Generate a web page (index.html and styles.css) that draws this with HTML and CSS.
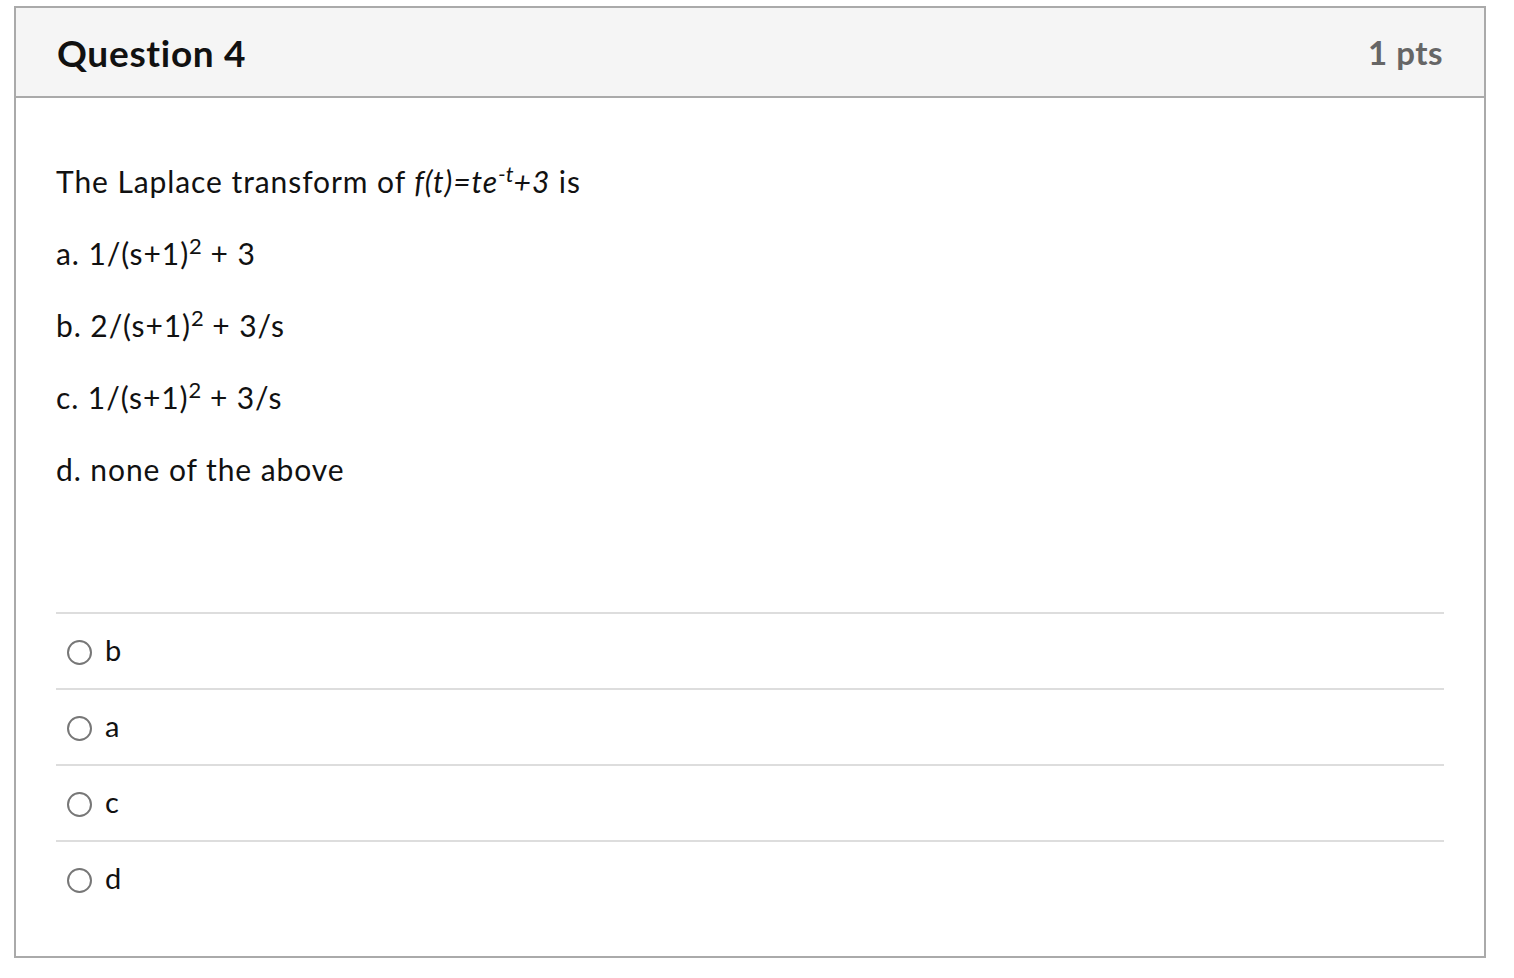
FILE: index.html
```html
<!DOCTYPE html>
<html>
<head>
<meta charset="utf-8">
<link rel="stylesheet" href="styles.css">
</head>
<body>
<div class="card">
  <div class="header">
    <h2 class="title">Question 4</h2>
    <span class="pts">1 pts</span>
  </div>
  <div class="content">
    <div class="question">
      <p>The Laplace transform of <em>f(t)=te<sup>-t</sup>+3</em> is</p>
      <p>a. 1/(s+1)<sup>2</sup> + 3</p>
      <p>b. 2/(s+1)<sup>2</sup> + 3/s</p>
      <p>c. 1/(s+1)<sup>2</sup> + 3/s</p>
      <p>d. none of the above</p>
    </div>
    <div class="answers">
      <label class="answer"><span class="radio"></span><span class="label">b</span></label>
      <label class="answer"><span class="radio"></span><span class="label">a</span></label>
      <label class="answer"><span class="radio"></span><span class="label">c</span></label>
      <label class="answer"><span class="radio"></span><span class="label">d</span></label>
    </div>
  </div>
</div>
</body>
</html>
```

FILE: styles.css
```css
html, body {
  margin: 0;
  background: #fff;
}
body {
  padding: 6px 28px 20px 14px;
  font-family: Lato, "Open Sans", sans-serif;
  color: #111;
}
.card {
  border: 2px solid #aaa;
  background: #fff;
}
.header {
  height: 88px;
  background: #f5f5f5;
  border-bottom: 2px solid #aaa;
  display: flex;
  align-items: center;
  justify-content: space-between;
  padding: 0 41px;
}
.title {
  margin: 0;
  font-size: 37px;
  font-weight: 700;
  color: #111;
  letter-spacing: 0.7px;
}
.pts {
  font-size: 33px;
  font-weight: 700;
  color: #666;
  letter-spacing: 0.5px;
}
.content {
  padding: 62px 40px 40px 40px;
}
.question p {
  margin: 0 0 30px 0;
  font-size: 30px;
  line-height: 42px;
  letter-spacing: 0.92px;
}
.question p:last-child {
  margin-bottom: 0;
}
.question sup {
  font-size: 22px;
  line-height: 0;
  letter-spacing: 0;
}
.answers {
  margin-top: 122px;
}
.answer {
  display: flex;
  align-items: center;
  height: 74px;
  border-top: 2px solid #ddd;
}
.radio {
  width: 21px;
  height: 21px;
  border: 2px solid #777;
  border-radius: 50%;
  margin-left: 11px;
  margin-right: 13px;
  margin-top: 2px;
  box-sizing: content-box;
}
.label {
  font-size: 29px;
  margin-top: -4px;
}
```
